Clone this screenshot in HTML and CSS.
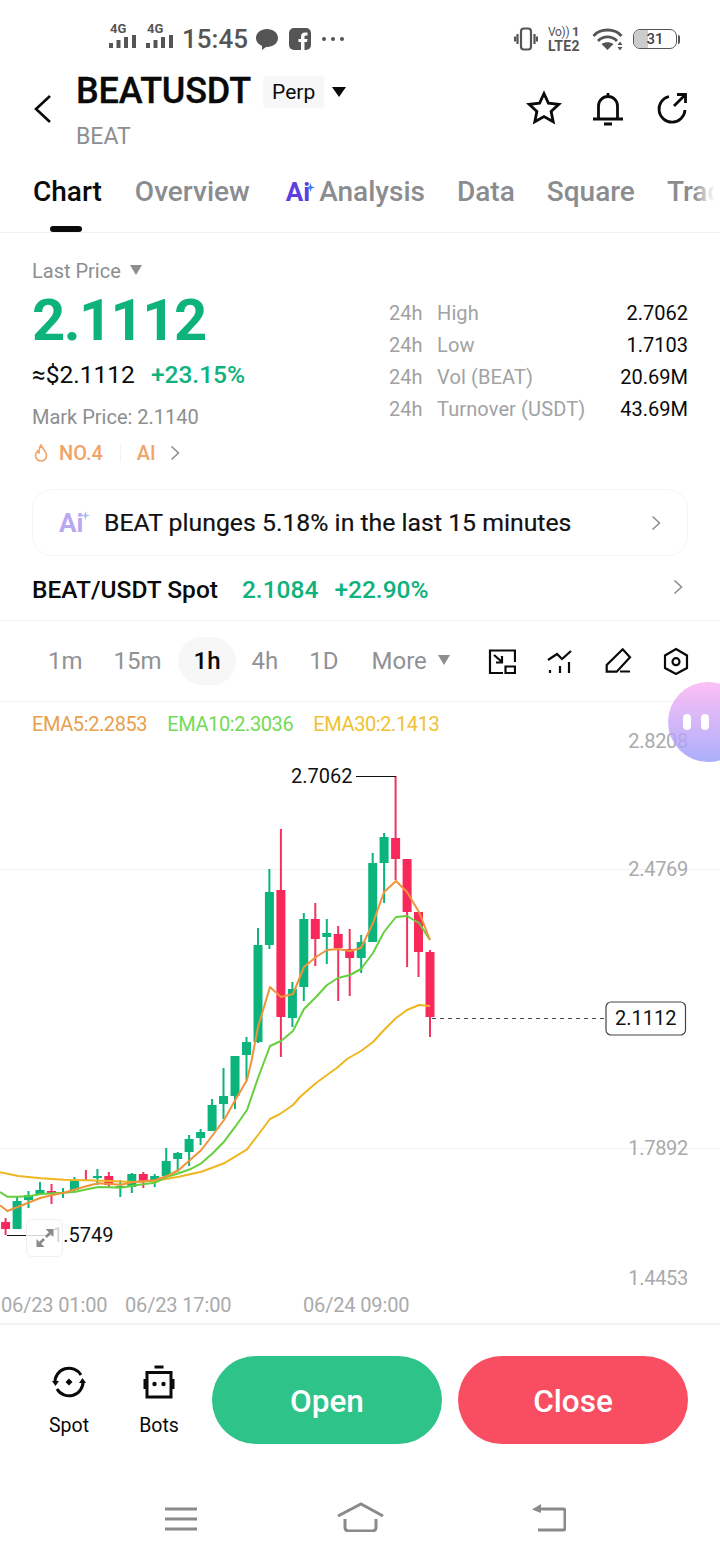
FILE: index.html
```html
<!DOCTYPE html>
<html lang="en">
<head>
<meta charset="utf-8">
<title>BEATUSDT</title>
<link rel="stylesheet" href="styles.css">
</head>
<body>
<div class="page">
  <div class="status">
    <div class="status-left">
      <svg class="sig" viewBox="0 0 28 28"><text x="1" y="11" class="sig-text">4G</text><path d="M2 21v5M9.500 18v8M17 15v11M25 13v13"/></svg>
      <svg class="sig" viewBox="0 0 28 28"><text x="1" y="11" class="sig-text">4G</text><path d="M2 21v5M9.500 18v8M17 15v11M25 13v13"/></svg>
      <span class="time">15:45</span>
      <svg class="st-chat" viewBox="0 0 22 22"><path d="M11 1c6 0 11 3.800 11 9s-5 9-11 9l-1 0-4 3v-4.200C2.500 16.500 0 13.500 0 10 0 4.800 5 1 11 1z"/></svg>
      <svg class="st-fb" viewBox="0 0 22 22"><rect width="22" height="22" rx="5"/><path class="st-fb-f" d="M12 22v-8H9.500v-3H12V8.500C12 6 13.500 4.500 16 4.500h2.500v3H17c-1 0-1.500.5-1.500 1.500v2h3l-.5 3h-2.500v8z"/></svg>
      <span class="st-dots"><i></i><i></i><i></i></span>
    </div>
    <div class="status-right">
      <svg class="st-vib" viewBox="0 0 24 24"><rect x="7" y="1.500" width="10" height="21" rx="3"/><path d="M3.500 7v10M1 9.500v5M20.500 7v10M23 9.500v5"/></svg>
      <div class="st-lte"><span class="st-vo">Vo)) <b>1</b></span><span class="st-l2">LTE2</span></div>
      <svg class="st-wifi" viewBox="0 0 31 24"><path class="wf" d="M1.500 9C8 1 23 1 29.500 9M6 14c5-5.500 14-5.500 19 0"/><path class="wf-d" d="M9.500 17c3.500-2.500 8.500-2.500 12 0l-6 6zM28 14.500l-2.500 3.500h5zM28 23.500l-2.500-3.500h5z"/></svg>
      <div class="st-bat"><div class="st-bat-box"><i class="st-bat-fill"></i><span>31</span></div><i class="st-bat-nub"></i></div>
    </div>
  </div>

  <header class="head">
    <svg class="back" viewBox="0 0 20 30"><path d="M17 2L3 15l14 13"/></svg>
    <div class="head-title">
      <div class="head-row">
        <h1 class="symbol">BEATUSDT</h1>
        <span class="perp">Perp</span>
        <i class="tri tri-black"></i>
      </div>
      <div class="sub">BEAT</div>
    </div>
    <div class="head-icons">
      <svg class="hi" viewBox="0 0 36 36"><path d="M18 3.500l4.400 9.600 10.400 1.200-7.700 7.100 2.100 10.300L18 26.500l-9.200 5.200 2.100-10.300-7.700-7.100 10.400-1.200z"/></svg>
      <svg class="hi" viewBox="0 0 36 36"><path d="M8.500 28V16a9.500 9.500 0 0 1 19 0v12M3 29h30M14 34h8M18 3v3"/></svg>
      <svg class="hi" viewBox="0 0 36 36"><path d="M15 6.500A13 13 0 1 0 31 20M20 16L31 5M23 4.500h8.500V13"/></svg>
    </div>
  </header>

  <nav class="tabs">
    <span class="tab tab-on">Chart</span>
    <span class="tab tab-ov">Overview</span>
    <span class="tab tab-ai"><span class="ai">Ai</span><svg class="ai-star" viewBox="0 0 10 10"><path d="M5 0l1.200 3.800L10 5 6.200 6.200 5 10 3.800 6.200 0 5l3.800-1.200z"/></svg>Analysis</span>
    <span class="tab">Data</span>
    <span class="tab">Square</span>
    <span class="tab">Trading</span>
    <i class="tabs-fade"></i>
  </nav>

  <section class="quote">
    <div class="quote-left">
      <div class="last">Last Price <i class="tri tri-gray"></i></div>
      <div class="price">2.1112</div>
      <div class="fiat"><span>≈$2.1112</span><span class="up">+23.15%</span></div>
      <div class="mark">Mark Price: 2.1140</div>
      <div class="rank">
        <svg class="flame" viewBox="0 0 14 18"><path d="M7 1c.5 3 5.500 5.500 5.500 10.500A5.500 5.500 0 0 1 1.500 11.500C1.500 9.500 2.500 8 3.500 7c.3 1.500 1 2 1.500 2C5 6 5.500 3 7 1z"/></svg>
        <span class="rank-no">NO.4</span>
        <i class="rank-sep"></i>
        <span>AI</span>
        <svg class="rank-chev" viewBox="0 0 10 16"><path d="M1.500 1.500L8.500 8l-7 6.500"/></svg>
      </div>
    </div>
    <div class="stats">
      <span class="s-k">24h</span><span class="s-k">High</span><span class="s-v">2.7062</span>
      <span class="s-k">24h</span><span class="s-k">Low</span><span class="s-v">1.7103</span>
      <span class="s-k">24h</span><span class="s-k">Vol (BEAT)</span><span class="s-v">20.69M</span>
      <span class="s-k">24h</span><span class="s-k">Turnover (USDT)</span><span class="s-v">43.69M</span>
    </div>
  </section>

  <div class="banner">
    <div class="ai-mark"><span class="ai-light">Ai</span><svg class="ai-star-light" viewBox="0 0 10 10"><path d="M5 0l1.200 3.800L10 5 6.200 6.200 5 10 3.800 6.200 0 5l3.800-1.200z"/></svg></div>
    <span class="banner-text">BEAT plunges 5.18% in the last 15 minutes</span>
    <svg class="chev" viewBox="0 0 10 16"><path d="M1.500 1.500L8.500 8l-7 6.500"/></svg>
  </div>

  <div class="spot">
    <span class="spot-name">BEAT/USDT Spot</span>
    <span class="up">2.1084</span>
    <span class="up">+22.90%</span>
    <svg class="chev chev-end" viewBox="0 0 10 16"><path d="M1.500 1.500L8.500 8l-7 6.500"/></svg>
  </div>

  <div class="toolbar">
    <span class="tf">1m</span>
    <span class="tf">15m</span>
    <span class="tf tf-on">1h</span>
    <span class="tf">4h</span>
    <span class="tf">1D</span>
    <span class="tf tf-more">More <i class="tri tri-gray"></i></span>
    <div class="tools">
      <svg class="tool" viewBox="0 0 28 28"><path d="M15 26H2V3.500h25V15M17.500 19.500H27V26h-9.500zM6 8l8 7M14 9v6.500H8"/></svg>
      <svg class="tool" viewBox="0 0 28 28"><path d="M2 13l9-6 5 5 9-8M4 23v3M14 19v7M23 15v11"/></svg>
      <svg class="tool" viewBox="0 0 28 28"><path d="M2.700 24.700V18L18.700 2.300 26 10.300 12.700 24.700zM16 24.500h10"/></svg>
      <svg class="tool" viewBox="0 0 28 28"><path d="M14 2l11 6.500V21l-11 6-11-6V8.500z"/><circle cx="14" cy="14.700" r="3.500"/></svg>
    </div>
  </div>

  <div class="chart">
    <div class="legend"><span class="e5">EMA5:2.2853</span><span class="e10">EMA10:2.3036</span><span class="e30">EMA30:2.1413</span></div>
    <svg class="canvas" viewBox="0 702 720 621">
      <path class="grid" d="M0 869.500H720M0 1148.500H720"/>
      <g class="axis">
        <text x="688" y="748">2.8208</text>
        <text x="688" y="876">2.4769</text>
        <text x="688" y="1155">1.7892</text>
        <text x="688" y="1285">1.4453</text>
      </g>
      <path class="wick-g" d="M384.100 833V903M372.700 853V942M361.200 935V973M326.800 919V964M303.800 913V1001M292.400 982V1027M269.400 869V949M258 928V1043M246.500 1037V1080M235 1056V1109M223.500 1068V1119M212.100 1099V1131M200.600 1129V1145M189.100 1135V1166M177.700 1152V1172M166.200 1148V1176M154.700 1174V1187M131.800 1173V1193M120.300 1180V1197M97.400 1169V1185M74.400 1177V1192M63 1188V1198M40 1182V1195M28.500 1191V1208M17.100 1196V1229"/>
      <path class="body-g" d="M384.100 837V863M372.700 863V942M361.200 942V958M326.800 933V937M303.800 919V987M292.400 989V1018M269.400 892V945M258 945V1042M246.500 1042V1055M235 1056V1096M223.500 1096V1104M212.100 1105V1131M200.600 1132V1138M189.100 1139V1152M177.700 1153V1159M166.200 1161V1176M154.700 1176V1181M131.800 1174V1187M120.300 1186V1187M97.400 1176V1178M74.400 1181V1190M63 1192V1193M40 1190V1194M28.500 1195V1200M17.100 1201V1229"/>
      <path class="wick-r" d="M430 950V1037M418.500 912V977M407.100 859V967M395.600 776V880M349.700 929V996M338.200 926V1001M315.300 903V966M280.900 829V1057M143.300 1172V1188M108.800 1172V1187M85.900 1170V1181M51.500 1184V1204M5.600 1218V1235"/>
      <path class="body-r" d="M430 952V1017M418.500 912V952M407.100 859V912M395.600 838V859M349.700 949V958M338.200 934V948M315.300 919V939M280.900 890V1017M143.300 1174V1181M108.800 1176V1185M51.500 1191V1193M5.600 1222V1229"/>
      <polyline class="l-e30" points="0,1172.300 18.300,1176 41,1178.300 64,1179.700 87,1180.300 109.700,1181 132.700,1182 155.300,1180.700 178.700,1176.700 201.300,1171.700 224,1163.300 247,1149.300 258,1135 270,1119 281,1113.300 293,1105 300,1097 316,1083 327,1075 338,1067 347,1059 361,1051 373,1042 384,1030 396,1018 407,1010 419,1005 430,1006"/>
      <polyline class="l-e10" points="0,1192 7.300,1196.700 18.300,1196.700 30,1196 41,1194 52.700,1193.300 64,1192.700 75.700,1191.700 87,1189.300 98.300,1187 109.700,1187.300 121,1187.700 132.700,1185.700 144,1184 155.300,1182.700 167,1176.700 178.700,1173.300 190,1169.300 201.300,1163.300 212.700,1153.300 224,1141.700 235.300,1126.700 247,1110 258,1078 270,1046 281,1041 293,1031 304,1009 316,997 327,985 338,978 350,975 361,969 373,953 384,932 396,917 407,916 419,923 430,940"/>
      <polyline class="l-e5" points="0,1205.300 7.300,1211 18.300,1206.700 30,1202 41,1197.700 52.700,1195 64,1192.700 75.700,1189.300 87,1186 98.300,1183.300 109.700,1184 121,1184.700 132.700,1182.300 144,1181.300 155.300,1180 167,1176 178.700,1170 190,1160 201.300,1150 212.700,1135 224,1120 235.300,1100 247,1080 251.700,1060 258,1027 270,987 281,997 293,994 304,967 316,957 327,950 338,949 350,951 361,948 373,923 384,892 396,881 407,892 419,912 430,940"/>
      <path class="mark-line" d="M356 776.500H396M7 1235.500H52"/>
      <path class="last-line" d="M432 1018.500H605"/>
      <g class="val">
        <text x="291" y="783">2.7062</text>
        <text x="52" y="1242">1.5749</text>
      </g>
      <rect class="last-box" x="606" y="1002" width="79.500" height="33" rx="5"/>
      <text class="val" x="615" y="1025">2.1112</text>
      <g class="dates">
        <text x="1" y="1312">06/23 01:00</text>
        <text x="125" y="1312">06/23 17:00</text>
        <text x="303" y="1312">06/24 09:00</text>
      </g>
    </svg>
    <div class="expand">
      <svg viewBox="0 0 24 24"><path d="M17 7l-4 4M7 17l4-4"/><path class="expand-f" d="M20.500 3h-8l8 8zM3.500 21v-8l8 8z"/></svg>
    </div>
  </div>

  <div class="actions">
    <div class="act">
      <svg class="act-i" viewBox="0 0 36 36"><path d="M4 19a14 14 0 0 1 26-8M32 17a14 14 0 0 1-26 8"/><path class="fill" d="M1 17h7l-3.500 5zM35 19h-7l3.500-5zM18 14.500l3.500 3.500-3.500 3.500-3.500-3.500z"/></svg>
      <span>Spot</span>
    </div>
    <div class="act">
      <svg class="act-i" viewBox="0 0 36 36"><path d="M6 8.500h24V33H6zM13.500 3h9"/><path d="M4 15v10M32 15v10"/><circle class="fill" cx="13.500" cy="20" r="2.200"/><circle class="fill" cx="22.500" cy="20" r="2.200"/></svg>
      <span>Bots</span>
    </div>
    <button class="btn btn-open">Open</button>
    <button class="btn btn-close">Close</button>
  </div>

  <div class="navbar">
    <svg class="nv nv-menu" viewBox="0 0 34 24"><path d="M1 2h32M1 12h32M1 22h32"/></svg>
    <svg class="nv nv-home" viewBox="0 0 47 30"><path d="M1 14L24 2l22 12M8 17v8q0 4 4 4h23q4 0 4-4v-8"/></svg>
    <svg class="nv nv-back" viewBox="0 0 34 28"><path d="M9 5h22q2 0 2 2v17q0 2-2 2H6"/><path class="nv-f" d="M0 5.500L9 0v9z"/></svg>
  </div>

  <div class="bubble"><i></i><i></i></div>
</div>
</body>
</html>
```
FILE: styles.css
```css
* { box-sizing: border-box; }
html, body { margin: 0; padding: 0; background: #fff; }
body { font-family: Roboto, "Liberation Sans", sans-serif; color: #0a0a0a; }
.page { position: relative; width: 720px; height: 1560px; overflow: hidden; background: #fff; }
i { display: block; font-style: normal; }

/* status bar */
.status { height: 76px; display: flex; align-items: center; justify-content: space-between; padding: 2px 40px 0 108px; color: #555; }
.status-left, .status-right { display: flex; align-items: center; }
.sig { width: 30px; height: 28px; margin-right: 7px; margin-top: -6px; }
.sig path { stroke: #555; stroke-width: 4; fill: none; }
.sig-text { font-size: 13px; font-weight: 700; fill: #555; }
.time { font-size: 26px; font-weight: 500; color: #555; width: 74px; }
.st-chat { width: 22px; height: 22px; fill: #555; margin-right: 11px; }
.st-fb { width: 22px; height: 22px; fill: #555; margin-right: 11px; }
.st-fb-f { fill: #fff; }
.st-dots { display: flex; gap: 5px; }
.st-dots i { width: 4px; height: 4px; border-radius: 50%; background: #555; }
.st-vib { width: 24px; height: 24px; fill: none; stroke: #555; stroke-width: 2.2; margin-right: 10px; }
.st-lte { display: flex; flex-direction: column; width: 34px; margin-right: 10px; }
.st-vo { font-size: 12px; line-height: 14px; white-space: nowrap; letter-spacing: -.3px; }
.st-vo b { font-weight: 700; font-size: 13px; }
.st-l2 { font-size: 14px; line-height: 15px; font-weight: 700; letter-spacing: .3px; }
.st-wifi { width: 31px; height: 24px; margin-right: 10px; }
.wf { fill: none; stroke: #555; stroke-width: 2.8; }
.wf-d { fill: #555; }
.st-bat { display: flex; align-items: center; gap: 1px; }
.st-bat-box { position: relative; width: 44px; height: 20px; border: 1.6px solid #555; border-radius: 7px; overflow: hidden; display: flex; align-items: center; justify-content: center; font-size: 15px; color: #444; font-weight: 500; }
.st-bat-fill { position: absolute; left: 0; top: 0; bottom: 0; width: 14px; background: #ccc; }
.st-bat-box span { position: relative; }
.st-bat-nub { width: 2px; height: 9px; background: #555; border-radius: 0 2px 2px 0; }

/* header */
.head { height: 84px; display: flex; padding-left: 33px; position: relative; }
.back { width: 20px; height: 30px; margin-top: 18px; fill: none; stroke: #0a0a0a; stroke-width: 2.6; }
.head-title { margin-left: 23px; }
.head-row { display: flex; align-items: center; height: 30px; }
.symbol { margin: 0; font-size: 36px; line-height: 30px; font-weight: 500; letter-spacing: -.2px; -webkit-text-stroke: .3px #0a0a0a; }
.perp { margin: 2px 0 0 12px; height: 32px; line-height: 32px; padding: 0 9px; font-size: 21px; background: #f7f7f7; border-radius: 3px; }
.sub { margin-top: 16px; font-size: 23px; line-height: 30px; color: #8c8e90; }
.tri { display: inline-block; width: 0; height: 0; border-left: 6px solid transparent; border-right: 6px solid transparent; border-top: 10px solid #8c8e90; }
.tri-black { margin: 2px 0 0 8px; border-left-width: 7px; border-right-width: 7px; border-top-color: #0a0a0a; }
.tri-gray { vertical-align: 3px; }
.head-icons { margin-left: auto; display: flex; gap: 28px; padding: 14px 30px 0 0; }
.hi { width: 36px; height: 36px; fill: none; stroke: #0a0a0a; stroke-width: 2.8; }

/* tabs */
.tabs { position: relative; height: 73px; border-bottom: 1px solid #f2f2f2; display: flex; gap: 32px; padding: 14px 0 0 33px; overflow: hidden; white-space: nowrap; }
.tab { font-size: 28px; line-height: 36px; font-weight: 500; color: #8a8c8f; flex: none; }
.tab-on { color: #0a0a0a; position: relative; }
.tab-on::after { content: ""; position: absolute; left: 17px; top: 52px; width: 32px; height: 6px; border-radius: 3px; background: #0a0a0a; }
.tab-ov { margin-left: 1px; }
.tab-ai { margin-left: 4px; }
.ai { color: #5b3fe0; font-weight: 700; font-size: 26px; }
.ai-star { width: 9px; height: 9px; fill: #3a7bf0; margin: 0 4px 12px -4px; vertical-align: middle; }
.tabs-fade { position: absolute; right: 0; top: 0; bottom: 1px; width: 26px; background: linear-gradient(to right, rgba(255,255,255,0), #fff 80%); }

/* quote */
.quote { height: 256px; display: flex; padding: 26px 32px 0; }
.quote-left { width: 357px; }
.last { font-size: 20px; line-height: 24px; color: #8c8e90; }
.last .tri { margin-left: 4px; }
.price { margin-top: 7px; font-size: 58px; line-height: 60px; font-weight: 700; color: #0db27c; letter-spacing: -1.6px; }
.fiat { margin-top: 10px; display: flex; gap: 16px; font-size: 24.5px; line-height: 30px; }
.up { color: #0db27c; font-weight: 500; }
.mark { margin-top: 15px; font-size: 20px; line-height: 24px; color: #8c8e90; }
.rank { margin-top: 12px; display: flex; align-items: center; font-size: 20px; line-height: 24px; font-weight: 500; color: #f0a468; }
.flame { width: 14px; height: 18px; fill: none; stroke: #f0a468; stroke-width: 1.6; margin-right: 11px; margin-left: 2px; }
.rank-sep { width: 1px; height: 18px; background: #f3f3f3; margin: 0 16px 0 17px; }
.rank-chev { width: 10px; height: 16px; fill: none; stroke: #8c8e90; stroke-width: 1.6; margin-left: 14px; }
.stats { margin-top: 38px; width: 299px; height: 128px; display: grid; grid-template-columns: 48px 1fr auto; grid-auto-rows: 32px; align-items: center; font-size: 20px; }
.s-k { color: #a0a2a4; }
.s-k:nth-child(3n+2) { letter-spacing: .12px; }
.s-v { text-align: right; }

/* banner */
.banner { margin: 0 32px; height: 67px; border: 1px solid #f4f4f4; border-radius: 20px; display: flex; align-items: center; padding: 0 26px; }
.ai-mark { width: 45px; display: flex; align-items: flex-start; flex: none; }
.ai-light { font-size: 26px; font-weight: 700; color: #b9a8f0; }
.ai-star-light { width: 9px; height: 9px; fill: #a9c0f5; margin: 3px 0 0 -2px; }
.banner-text { font-size: 24.8px; font-weight: 400; color: #111; -webkit-text-stroke: .2px #111; }
.chev { width: 10px; height: 16px; fill: none; stroke: #8c8e90; stroke-width: 1.6; margin-left: auto; }

/* spot */
.spot { height: 65px; border-bottom: 1px solid #f2f2f2; display: flex; align-items: center; gap: 16px; padding: 2px 37px 0 32px; font-size: 24.5px; font-weight: 500; }
.spot-name { margin-right: 8px; }
.chev-end { margin-top: -4px; }

/* toolbar */
.toolbar { height: 81px; border-bottom: 1px solid #f2f2f2; display: flex; align-items: center; padding: 0 30px 0 32.5px; }
.tf { padding: 0 15.5px; font-size: 24px; line-height: 48px; color: #909294; }
.tf-on { margin-left: 1px; background: #f7f7f7; border-radius: 24px; color: #0a0a0a; font-weight: 500; }
.tf-more { margin-left: 2px; white-space: nowrap; }
.tf-more .tri { margin-left: 5px; vertical-align: 4px; }
.tools { margin-left: auto; display: flex; gap: 30px; }
.tool { width: 28px; height: 28px; fill: none; stroke: #0a0a0a; stroke-width: 2.2; }

/* chart */
.chart { position: relative; height: 623px; border-bottom: 2px solid #f2f2f2; }
.canvas { display: block; width: 720px; height: 621px; }
.legend { position: absolute; left: 32px; top: 10px; display: flex; gap: 20px; font-size: 20px; line-height: 24px; letter-spacing: -.4px; }
.e5 { color: #e8a04c; }
.e10 { color: #72da56; }
.e30 { color: #f0c232; }
.grid { stroke: #f2f2f2; stroke-width: 1; fill: none; }
.axis text { font-size: 20px; letter-spacing: -.3px; fill: #a8aaac; text-anchor: end; }
.wick-g { stroke: #0cb47d; stroke-width: 2; fill: none; }
.body-g { stroke: #0cb47d; stroke-width: 9; fill: none; }
.wick-r { stroke: #f2325f; stroke-width: 2; fill: none; }
.body-r { stroke: #f9285a; stroke-width: 9; fill: none; }
.l-e5, .l-e10, .l-e30 { fill: none; stroke-width: 2; stroke-linejoin: round; }
.l-e5 { stroke: #f0933a; }
.l-e10 { stroke: #66cf3e; }
.l-e30 { stroke: #eeb71f; }
.mark-line { stroke: #111; stroke-width: 1.2; fill: none; }
.last-line { stroke: #444; stroke-width: 1.2; stroke-dasharray: 4 4; fill: none; }
.val text, text.val { font-size: 20px; fill: #111; }
.last-box { fill: #fff; stroke: #444; stroke-width: 1.2; }
.dates text { font-size: 20px; letter-spacing: -.15px; fill: #a8aaac; }
.expand { position: absolute; left: 26px; top: 517px; width: 37px; height: 38px; border: 1px solid #f0f0f0; border-radius: 6px; background: rgba(255,255,255,.82); display: flex; align-items: center; justify-content: center; }
.expand svg { width: 24px; height: 24px; fill: none; stroke: #8a8a8a; stroke-width: 2.6; }
.expand-f { fill: #8a8a8a; stroke: none; }

/* actions */
.actions { height: 145px; display: flex; padding: 31px 32px 0 32px; position: relative; }
.act { width: 74px; margin-right: 16px; display: flex; flex-direction: column; align-items: center; font-size: 19.5px; line-height: 24px; margin-top: 8px; }
.act-i { width: 36px; height: 36px; fill: none; stroke: #0a0a0a; stroke-width: 3; margin-bottom: 14px; }
.act-i .fill { fill: #0a0a0a; stroke: none; }
.btn { width: 230px; height: 88px; border: 0; border-radius: 44px; font-family: inherit; font-size: 31.5px; font-weight: 500; color: #fff; padding: 2px 0 0; }
.btn-open { background: #2dc389; margin-right: 16px; }
.btn-close { background: #f94e62; }

/* nav */
.navbar { height: 90px; position: relative; display: flex; align-items: flex-start; padding-top: 35px; }
.nv { fill: none; stroke: #8a8a8a; stroke-width: 3; flex: none; }
.nv-menu { width: 34px; height: 24px; margin-left: 164px; margin-top: 2px; }
.nv-home { width: 47px; height: 30px; margin-left: 139px; margin-top: -3px; }
.nv-back { width: 34px; height: 28px; margin-left: 148px; margin-top: -1px; }
.nv-f { fill: #8a8a8a; stroke: none; }

/* floating bubble */
.bubble { position: absolute; left: 668px; top: 682px; width: 80px; height: 80px; border-radius: 50%; background: linear-gradient(to bottom, #fdb2f3, #9a9ffb); opacity: .82; display: flex; gap: 10px; align-items: center; padding: 0 0 0 15px; }
.bubble i { width: 8px; height: 16px; border-radius: 4px; background: #fff; }
```
